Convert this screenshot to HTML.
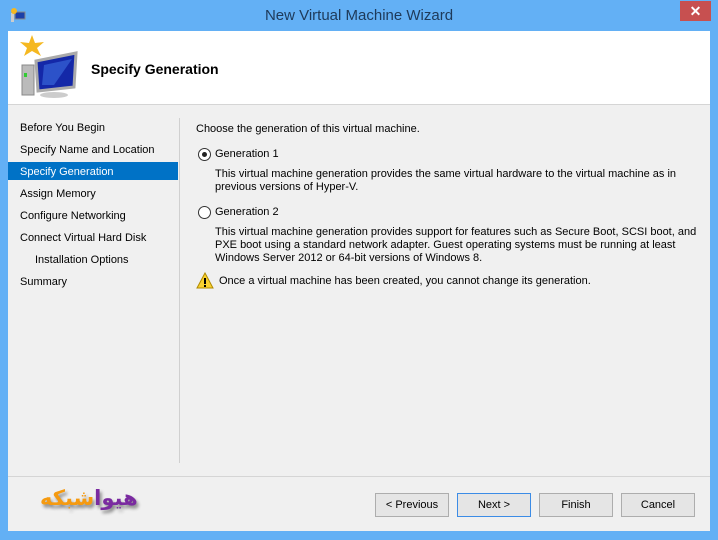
<!DOCTYPE html>
<html><head><style>
*{margin:0;padding:0;box-sizing:border-box}
body{width:718px;height:540px;background:#63b0f5;position:relative;overflow:hidden;font-family:"Liberation Sans",Tahoma,sans-serif;font-size:11px;color:#000}
.abs{position:absolute;white-space:nowrap}
.title{left:0;top:7px;width:718px;text-align:center;font-size:15px;color:#1e3a5a}
.close{left:680px;top:1px;width:31px;height:20px;background:#c75050;color:#fff;text-align:center;font-size:14px;font-weight:bold;line-height:20px}
.client{left:8px;top:31px;width:702px;height:500px;background:#f0f0f0}
.head{left:0;top:0;width:702px;height:74px;background:#fff;border-bottom:1px solid #d5d5d5}
.nav div{position:absolute;left:12px;white-space:nowrap}
.sel{left:0;top:131px;width:170px;height:18px;background:#0072c6}
.btn{top:462px;width:74px;height:24px;border:1px solid #adadad;background:#e5e5e5;text-align:center;line-height:22px}
.r{position:absolute;width:13px;height:13px;border:1px solid #333;border-radius:50%;background:#fff}
</style></head><body>
<svg class="abs" style="left:10px;top:7px" width="16" height="16"><rect x="5" y="5" width="10" height="7" fill="#1c3fa8" stroke="#888"/><rect x="1" y="6" width="3" height="9" fill="#ccc"/><circle cx="4" cy="4" r="3" fill="#f5b820"/></svg>
<div class="abs title">New Virtual Machine Wizard</div>
<div class="abs close">✕</div>
<div class="abs client">
 <div class="abs head">
  <svg class="abs" style="left:6px;top:4px" width="68" height="64">
   <rect x="8" y="30" width="12" height="30" fill="#bbb" stroke="#888"/>
   <rect x="10" y="38" width="3" height="4" fill="#3c3"/>
   <polygon points="22,26 62,18 60,52 24,56" fill="#1428a8" stroke="#aaa" stroke-width="3"/>
   <polygon points="30,30 58,24 40,50 28,50" fill="#3c6ee0" opacity=".6"/>
   <ellipse cx="40" cy="60" rx="14" ry="3" fill="#ccc"/>
   <polygon points="18,0 21,8 30,7 23,13 27,21 18,16 10,21 13,13 6,7 15,8" fill="#f5b820"/>
  </svg>
  <div class="abs" style="left:83px;top:30px;font-size:14px;font-weight:bold">Specify Generation</div>
 </div>
 <div class="abs sel"></div>
 <div class="nav">
  <div style="top:91px">Before You Begin</div>
  <div style="top:113px">Specify Name and Location</div>
  <div style="top:135px;color:#fff">Specify Generation</div>
  <div style="top:157px">Assign Memory</div>
  <div style="top:179px">Configure Networking</div>
  <div style="top:201px">Connect Virtual Hard Disk</div>
  <div style="top:223px;left:27px">Installation Options</div>
  <div style="top:245px">Summary</div>
 </div>
 <div class="abs" style="left:171px;top:87px;width:1px;height:345px;background:#d0d0d0"></div>
 <div class="abs" style="left:188px;top:92px">Choose the generation of this virtual machine.</div>
 <div class="r" style="left:190px;top:117px"><div style="margin:3px;width:5px;height:5px;border-radius:50%;background:#222"></div></div>
 <div class="abs" style="left:207px;top:117px">Generation 1</div>
 <div class="abs" style="left:207px;top:137px;line-height:13px">This virtual machine generation provides the same virtual hardware to the virtual machine as in<br>previous versions of Hyper-V.</div>
 <div class="r" style="left:190px;top:175px"></div>
 <div class="abs" style="left:207px;top:175px">Generation 2</div>
 <div class="abs" style="left:207px;top:195px;line-height:13px">This virtual machine generation provides support for features such as Secure Boot, SCSI boot, and<br>PXE boot using a standard network adapter. Guest operating systems must be running at least<br>Windows Server 2012 or 64-bit versions of Windows 8.</div>
 <svg class="abs" style="left:188px;top:241px" width="18" height="17"><polygon points="9,1 17,16 1,16" fill="#f8d030" stroke="#b08a00"/><rect x="8" y="6" width="2" height="6" fill="#000"/><rect x="8" y="13" width="2" height="2" fill="#000"/></svg>
 <div class="abs" style="left:211px;top:244px">Once a virtual machine has been created, you cannot change its generation.</div>
 <div class="abs" style="left:0;top:445px;width:702px;height:1px;background:#d5d5d5"></div>
 <div class="abs" style="left:32px;top:455px;font-size:21px;font-weight:bold;font-family:'DejaVu Sans',sans-serif;text-shadow:2px 3px 3px #888;direction:rtl"><span style="color:#7a2aa0">هیوا</span><span style="color:#f59a10">شبکه</span></div>
 <div class="abs btn" style="left:367px">&lt; Previous</div>
 <div class="abs btn" style="left:449px;border-color:#3c8ce6">Next &gt;</div>
 <div class="abs btn" style="left:531px">Finish</div>
 <div class="abs btn" style="left:613px">Cancel</div>
</div>
</body></html>
